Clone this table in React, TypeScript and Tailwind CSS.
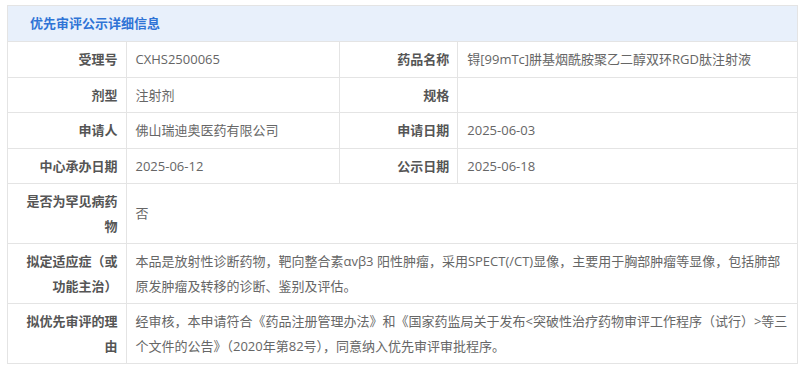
const font = { fontFamily: '"Open Sans", "Noto Sans CJK SC", sans-serif' };

const Label = ({ children }: { children: React.ReactNode }) => (
  <td className="border border-[#e4e4e4] px-[8px] py-[5px] text-right align-middle font-bold text-[#555] leading-[24.5px]">
    {children}
  </td>
);

const Value = ({ children, span }: { children?: React.ReactNode; span?: number }) => (
  <td
    colSpan={span}
    className="border border-[#e4e4e4] pl-[9px] pr-[8px] py-[5px] text-left align-middle text-[#666] leading-[24.5px]"
  >
    {children}
  </td>
);

export default function App() {
  return (
    <div className="bg-white w-[805px] h-[371px] pt-[5px] px-[7px]" style={font}>
      <div className="border border-[#e4e4e4] border-b-0">
        <div className="h-[35px] bg-[#e8f0fb] flex items-center pl-[22px] text-[13px] font-bold text-[#2f74d6]">
          优先审评公示详细信息
        </div>
      </div>
      <table className="w-full table-fixed border-collapse text-[13px]">
        <colgroup>
          <col className="w-[15%]" />
          <col className="w-[27%]" />
          <col className="w-[15%]" />
          <col className="w-[43%]" />
        </colgroup>
        <tbody>
          <tr>
            <Label>受理号</Label>
            <Value>CXHS2500065</Value>
            <Label>药品名称</Label>
            <Value>锝[99mTc]肼基烟酰胺聚乙二醇双环RGD肽注射液</Value>
          </tr>
          <tr>
            <Label>剂型</Label>
            <Value>注射剂</Value>
            <Label>规格</Label>
            <Value />
          </tr>
          <tr>
            <Label>申请人</Label>
            <Value>佛山瑞迪奥医药有限公司</Value>
            <Label>申请日期</Label>
            <Value>2025-06-03</Value>
          </tr>
          <tr>
            <Label>中心承办日期</Label>
            <Value>2025-06-12</Value>
            <Label>公示日期</Label>
            <Value>2025-06-18</Value>
          </tr>
          <tr>
            <Label>是否为罕见病药物</Label>
            <Value span={3}>否</Value>
          </tr>
          <tr>
            <Label>拟定适应症（或功能主治）</Label>
            <Value span={3}>
              本品是放射性诊断药物，靶向整合素αvβ3 阳性肿瘤，采用SPECT(/CT)显像，主要用于胸部肿瘤等显像，包括肺部原发肿瘤及转移的诊断、鉴别及评估。
            </Value>
          </tr>
          <tr>
            <Label>拟优先审评的理由</Label>
            <Value span={3}>
              经审核，本申请符合《药品注册管理办法》和《国家药监局关于发布&lt;突破性治疗药物审评工作程序（试行）&gt;等三个文件的公告》（2020年第82号），同意纳入优先审评审批程序。
            </Value>
          </tr>
        </tbody>
      </table>
    </div>
  );
}
